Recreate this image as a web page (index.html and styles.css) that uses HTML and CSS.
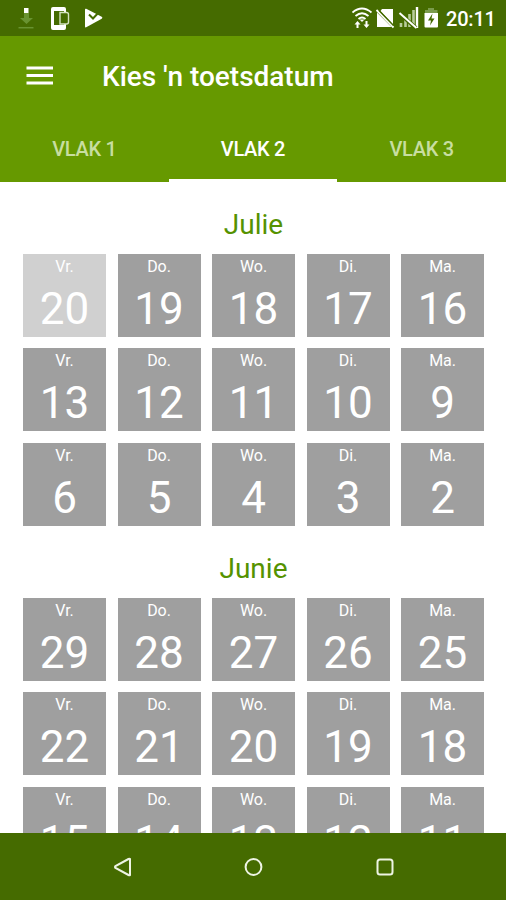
FILE: index.html
```html
<!DOCTYPE html>
<html lang="af">
<head>
<meta charset="utf-8">
<title>Kies 'n toetsdatum</title>
<link rel="stylesheet" href="styles.css">
</head>
<body>
<div class="status">
  <svg class="status-left" width="106" height="36" viewBox="0 0 106 36">
    <path d="M24 13h5v5h4l-6.500 6-6.500-6h4z" fill="#699331"/><path d="M18.500 27.700h15" stroke="#699331" stroke-width="1.500"/><path d="M24 8h4.500v5H24z" fill="#fff"/>
    <path fill="#fff" fill-rule="evenodd" d="M53 7h11q2 0 2 2v19q0 2-2 2H53q-2 0-2-2V9q0-2 2-2zM54 11v14h10V11z"/><path d="M60 12.500h6.500q2 0 2 2v7.500q0 2-2 2H60z" fill="#456b00" stroke="#d4e2c0" stroke-width="1.400"/>
    <path d="M85 9.500q0-1.200 1.200-.7l15.500 8q1.500 1 0 2l-15.500 8.500q-1.200.5-1.200-.8z" fill="#fff"/><path d="M89 14.500l4 4 7.500-8" fill="none" stroke="#456b00" stroke-width="2"/>
  </svg>
  <svg class="status-right" width="94" height="36" viewBox="352 0 94 36">
    <g fill="none" stroke="#fff" stroke-width="1.800"><path d="M352.500 12.500q9.500-8 19 0M355.500 16q6.500-5.500 13 0M358.500 19q3.500-3 7 0"/></g>
    <path d="M359.500 19.500h5l-2.500 2.500z" fill="#fff"/>
    <path d="M357.500 21l3 3.500h-2V28h-2v-3.500h-2zM366.500 28l-3-3.500h2V21h2v3.500h2z" fill="#fff"/>
    <path d="M380.500 11L382 9h11v15.500zM377 12.500L391.500 27H377z" fill="#fff"/><path d="M376.500 10l17 17.500" stroke="#fff" stroke-width="1.800"/><path d="M379 10.500l14.500 15" stroke="#456b00" stroke-width="1.300"/>
    <path d="M401 23v4M405.500 19v8M409.500 14v13M413.500 10v17" stroke="#b9cd9c" stroke-width="2.600"/><path d="M417 7v21" stroke="#fff" stroke-width="2.400"/><path d="M399 13l17 15" stroke="#456b00" stroke-width="4"/><path d="M399.500 13l17 15" stroke="#fff" stroke-width="2"/>
    <path d="M425 13v-3h3V8h6v2h3.500v3z" fill="#7a9b4c"/><path d="M424.500 13H438v13.500q0 1-1 1h-11.500q-1 0-1-1z" fill="#fff"/><path d="M432.500 13.500l-4.500 7h3l-1 5 4.500-7h-3z" fill="#456b00"/>
  </svg>
  <span class="clock">20:11</span>
</div>
<header>
  <div class="toolbar">
    <svg class="menu" width="27" height="20" viewBox="0 0 27 20"><path d="M0.500 2h26.500M0.500 9.500h26.500M0.500 17h26.500" stroke="#fff" stroke-width="3"/></svg>
    <h1>Kies 'n toetsdatum</h1>
  </div>
  <nav class="tabs"><a>VLAK 1</a><a class="active">VLAK 2</a><a>VLAK 3</a></nav>
</header>
<main>
  <h2>Julie</h2>
  <section class="days">
    <div class="day off"><span>Vr.</span><b>20</b></div><div class="day"><span>Do.</span><b>19</b></div><div class="day"><span>Wo.</span><b>18</b></div><div class="day"><span>Di.</span><b>17</b></div><div class="day"><span>Ma.</span><b>16</b></div>
    <div class="day"><span>Vr.</span><b>13</b></div><div class="day"><span>Do.</span><b>12</b></div><div class="day"><span>Wo.</span><b>11</b></div><div class="day"><span>Di.</span><b>10</b></div><div class="day"><span>Ma.</span><b>9</b></div>
    <div class="day"><span>Vr.</span><b>6</b></div><div class="day"><span>Do.</span><b>5</b></div><div class="day"><span>Wo.</span><b>4</b></div><div class="day"><span>Di.</span><b>3</b></div><div class="day"><span>Ma.</span><b>2</b></div>
  </section>
  <h2>Junie</h2>
  <section class="days">
    <div class="day"><span>Vr.</span><b>29</b></div><div class="day"><span>Do.</span><b>28</b></div><div class="day"><span>Wo.</span><b>27</b></div><div class="day"><span>Di.</span><b>26</b></div><div class="day"><span>Ma.</span><b>25</b></div>
    <div class="day"><span>Vr.</span><b>22</b></div><div class="day"><span>Do.</span><b>21</b></div><div class="day"><span>Wo.</span><b>20</b></div><div class="day"><span>Di.</span><b>19</b></div><div class="day"><span>Ma.</span><b>18</b></div>
    <div class="day"><span>Vr.</span><b>15</b></div><div class="day"><span>Do.</span><b>14</b></div><div class="day"><span>Wo.</span><b>13</b></div><div class="day"><span>Di.</span><b>12</b></div><div class="day"><span>Ma.</span><b>11</b></div>
  </section>
</main>
<footer>
  <svg width="20" height="20" viewBox="0 0 20 20"><path d="M17 2v16q-.5.500-1.500 0L2.500 11q-1-1 0-2l13-7q1-.5 1.500 0z"/></svg>
  <svg width="20" height="20" viewBox="0 0 20 20"><circle cx="9.500" cy="10" r="7.900"/></svg>
  <svg width="20" height="20" viewBox="0 0 20 20"><rect x="2.500" y="2.500" width="15" height="15" rx="2.500"/></svg>
</footer>
</body>
</html>
```
FILE: styles.css
```css
* { box-sizing: border-box; }
body {
  margin: 0;
  height: 900px;
  display: flex;
  flex-direction: column;
  overflow: hidden;
  background: #fff;
  color: #fff;
  font-family: Roboto, "Liberation Sans", sans-serif;
}
.status {
  flex: none;
  height: 36px;
  display: flex;
  align-items: center;
  background: #456b00;
}
.status-right { margin-left: auto; }
.clock {
  width: 60px;
  font-size: 20px;
  font-weight: 500;
  line-height: 36px;
  padding-top: 2px;
  letter-spacing: -0.2px;
}
header {
  flex: none;
  height: 145.500px;
  background: #669900;
}
.toolbar {
  height: 80px;
  display: flex;
  align-items: center;
  padding-left: 26px;
}
.menu { margin-top: -1px; }
h1 {
  margin: 1px 0 0 49px;
  font-size: 28px;
  letter-spacing: -0.020px;
  font-weight: 500;
  line-height: 40px;
}
.tabs {
  display: grid;
  grid-template-columns: repeat(3, 1fr);
  grid-template-rows: 65.500px;
}
.tabs a {
  text-align: center;
  font-size: 20px;
  font-weight: 500;
  letter-spacing: -0.300px;
  line-height: 67px;
  height: 65.500px;
  color: #c8dea0;
}
.tabs .active {
  color: #fff;
  border-bottom: 3px solid #fff;
}
main {
  flex: 1;
  min-height: 0;
  overflow: hidden;
  padding: 23px 22px 0 23px;
}
h2 {
  margin: 0;
  height: 49px;
  padding-top: 2px;
  text-align: center;
  font-size: 28px;
  font-weight: 400;
  line-height: 36px;
  color: #559200;
}
.days {
  display: grid;
  grid-template-columns: repeat(5, 83px);
  grid-auto-rows: 83.100px;
  gap: 11.500px;
  margin-bottom: 23px;
}
.day {
  display: flex;
  flex-direction: column;
  align-items: center;
  background: #9f9f9f;
}
.day.off { background: #d0d0d0; }
.day span {
  font-size: 16px;
  line-height: 25px;
  letter-spacing: -0.100px;
}
.day b {
  font-size: 44px;
  font-weight: 400;
  line-height: 61px;
}
footer {
  flex: none;
  height: 67px;
  padding-left: 1px;
  display: flex;
  justify-content: center;
  align-items: center;
  gap: 111px;
  background: #456b00;
}
footer svg {
  fill: none;
  stroke: #eef4e4;
  stroke-width: 2;
}
```
